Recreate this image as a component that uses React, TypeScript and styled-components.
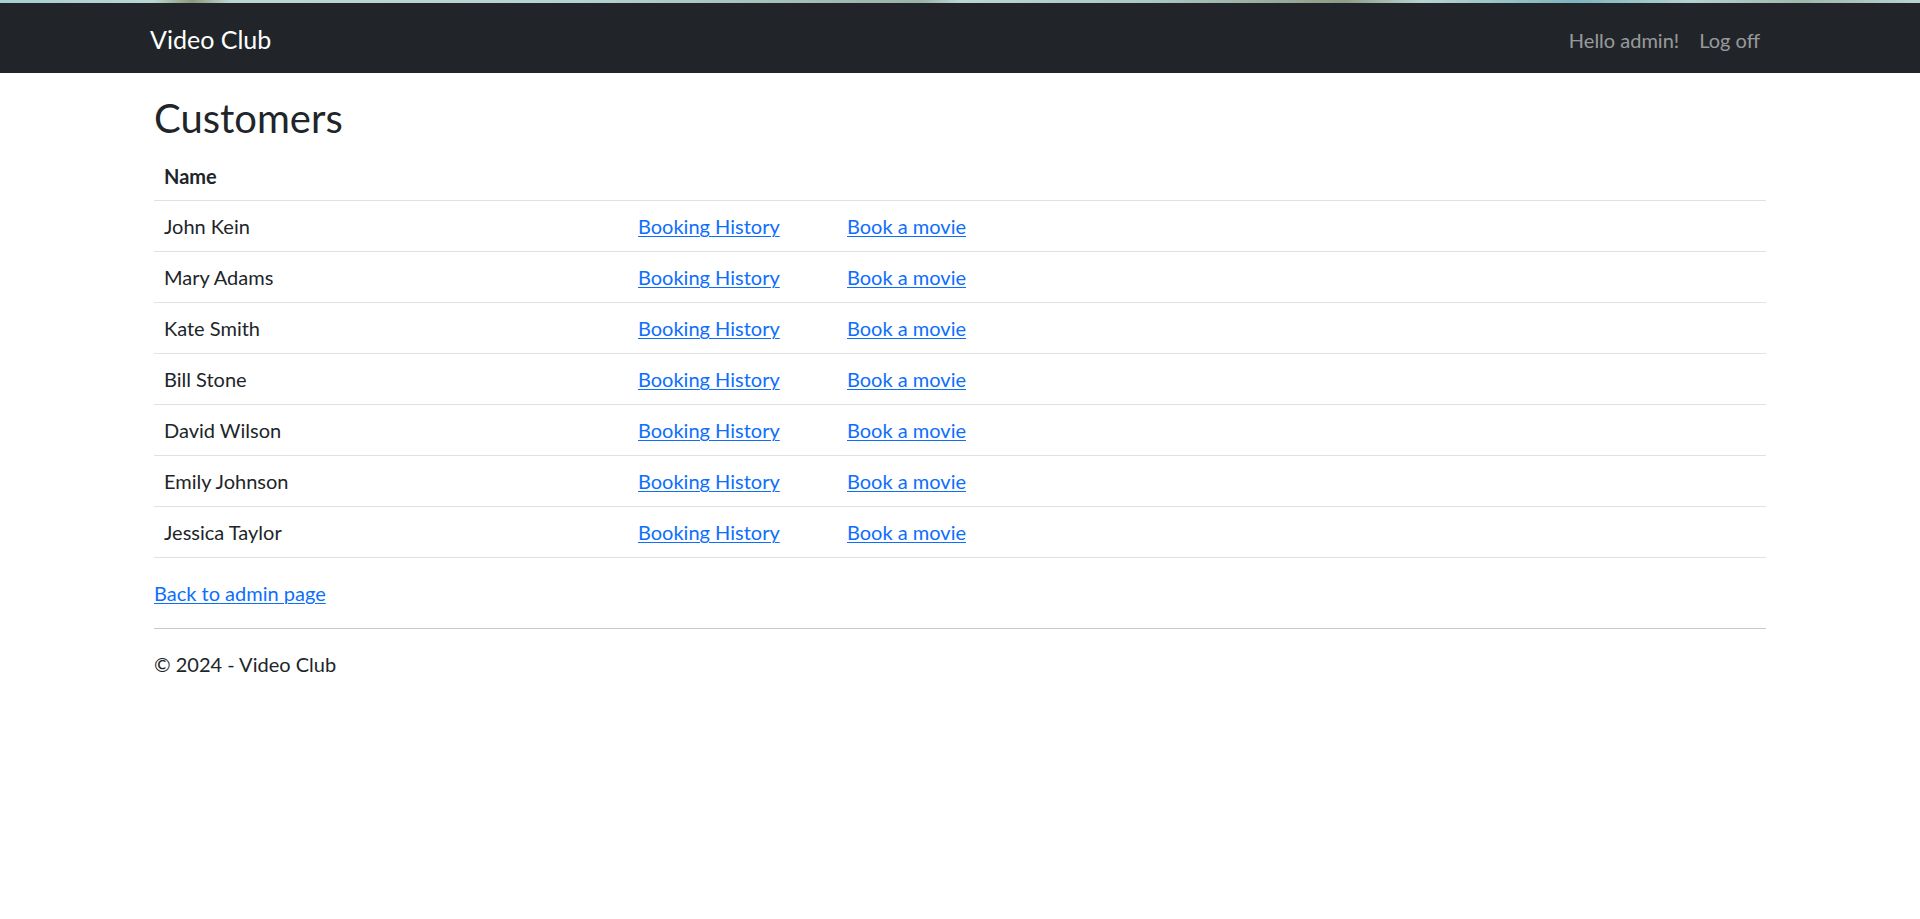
import React from "react";
import styled, { createGlobalStyle } from "styled-components";

const GlobalStyle = createGlobalStyle`
  html, body { margin: 0; padding: 0; background: #ffffff; }
  body {
    font-family: "Lato", "Open Sans", sans-serif;
    font-size: 20px;
    line-height: 1.5;
    color: #212529;
  }
  * { box-sizing: border-box; }
`;

const TopStrip = styled.div`
  height: 3px;
  background: linear-gradient(
    90deg,
    #a9cfd0 0%,
    #b9d6d2 8%,
    #8a9a7a 10%,
    #bcd7d3 12%,
    #b5d3d1 30%,
    #9bb3a8 48%,
    #bcd6d2 50%,
    #aac8c4 60%,
    #8f9c86 70%,
    #b7d3d0 74%,
    #7fb4bd 82%,
    #b4d2cf 88%,
    #a0b8ac 94%,
    #b9d5d2 100%
  );
`;

const NavBar = styled.nav`
  background: #212529;
  height: 70px;
`;

const NavInner = styled.div`
  width: 1620px;
  height: 100%;
  margin: 0 auto;
  padding-top: 4px;
  display: flex;
  align-items: center;
  justify-content: space-between;
`;

const Brand = styled.a`
  font-size: 25px;
  line-height: 1.5;
  color: #ffffff;
  text-decoration: none;
`;

const NavLinks = styled.div`
  display: flex;
  align-items: center;
`;

const NavLink = styled.a`
  font-size: 20px;
  color: rgba(255, 255, 255, 0.55);
  text-decoration: none;
  padding: 10px;
`;

const Container = styled.div`
  width: 1612px;
  margin: 0 auto;
  padding-top: 21px;
`;

const Title = styled.h2`
  font-size: 40px;
  font-weight: 400;
  line-height: 1.2;
  margin: 0 0 9px;
  color: #212529;
`;

const Table = styled.table`
  width: 100%;
  border-collapse: collapse;
  margin-bottom: 20px;
  table-layout: fixed;
`;

const Col = styled.col<{ $w?: number }>`
  width: ${(p) => (p.$w ? `${p.$w}px` : "auto")};
`;

const Th = styled.th`
  text-align: left;
  font-weight: 700;
  padding: 10px 10px 9px;
  border-bottom: 1px solid #dee2e6;
`;

const Td = styled.td`
  padding: 10px 10px;
  height: 51px;
  border-bottom: 1px solid #dee2e6;
  white-space: nowrap;
`;

const Link = styled.a`
  color: #0d6efd;
  text-decoration: underline;
  text-underline-offset: 2px;
  text-decoration-thickness: 1px;
`;

const Para = styled.p`
  margin: 0 0 20px;
`;

const Rule = styled.hr`
  margin: 20px 0;
  border: 0;
  border-top: 1px solid rgba(33, 37, 41, 0.25);
`;

const Footer = styled.footer`
  color: #212529;
`;

const customers = [
  "John Kein",
  "Mary Adams",
  "Kate Smith",
  "Bill Stone",
  "David Wilson",
  "Emily Johnson",
  "Jessica Taylor",
];

export default function App() {
  return (
    <>
      <GlobalStyle />
      <TopStrip />
      <NavBar>
        <NavInner>
          <Brand href="#">Video Club</Brand>
          <NavLinks>
            <NavLink href="#">Hello admin!</NavLink>
            <NavLink href="#">Log off</NavLink>
          </NavLinks>
        </NavInner>
      </NavBar>
      <Container>
        <Title>Customers</Title>
        <Table>
          <colgroup>
            <Col $w={474} />
            <Col $w={209} />
            <Col />
          </colgroup>
          <thead>
            <tr>
              <Th>Name</Th>
              <Th />
              <Th />
            </tr>
          </thead>
          <tbody>
            {customers.map((c) => (
              <tr key={c}>
                <Td>{c}</Td>
                <Td>
                  <Link href="#">Booking History</Link>
                </Td>
                <Td>
                  <Link href="#">Book a movie</Link>
                </Td>
              </tr>
            ))}
          </tbody>
        </Table>
        <Para>
          <Link href="#">Back to admin page</Link>
        </Para>
        <Rule />
        <Footer>
          <Para>© 2024 - Video Club</Para>
        </Footer>
      </Container>
    </>
  );
}
